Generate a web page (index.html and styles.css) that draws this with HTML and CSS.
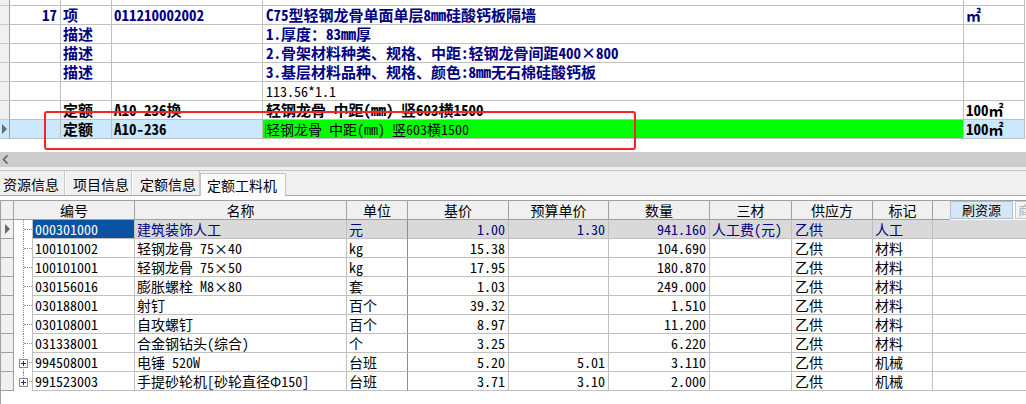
FILE: index.html
```html
<!DOCTYPE html>
<html lang="zh-CN">
<head>
<meta charset="utf-8">
<title>定额工料机</title>
<link rel="stylesheet" href="styles.css">
</head>
<body>
<div class="top">
  <div class="trow partial"><div class="tc rh"></div><div class="tc"></div><div class="tc"></div><div class="tc"></div><div class="tc"></div><div class="tc"></div><div class="tc end"></div></div>
  <div class="trow b navy"><div class="tc rh"></div><div class="tc r">17</div><div class="tc">项</div><div class="tc">011210002002</div><div class="tc">C75型轻钢龙骨单面单层8mm硅酸钙板隔墙</div><div class="tc">㎡</div><div class="tc end"></div></div>
  <div class="trow b navy"><div class="tc rh"></div><div class="tc"></div><div class="tc">描述</div><div class="tc"></div><div class="tc">1.厚度：83mm厚</div><div class="tc"></div><div class="tc end"></div></div>
  <div class="trow b navy"><div class="tc rh"></div><div class="tc"></div><div class="tc">描述</div><div class="tc"></div><div class="tc">2.骨架材料种类、规格、中距:轻钢龙骨间距400×800</div><div class="tc"></div><div class="tc end"></div></div>
  <div class="trow b navy"><div class="tc rh"></div><div class="tc"></div><div class="tc">描述</div><div class="tc"></div><div class="tc">3.基层材料品种、规格、颜色:8mm无石棉硅酸钙板</div><div class="tc"></div><div class="tc end"></div></div>
  <div class="trow"><div class="tc rh"></div><div class="tc"></div><div class="tc"></div><div class="tc"></div><div class="tc">113.56*1.1</div><div class="tc"></div><div class="tc end"></div></div>
  <div class="trow b"><div class="tc rh"></div><div class="tc"></div><div class="tc">定额</div><div class="tc">A10-236换</div><div class="tc">轻钢龙骨 中距(mm) 竖603横1500</div><div class="tc">100㎡</div><div class="tc end"></div></div>
  <div class="trow sel"><div class="tc rh"><span class="tri"></span></div><div class="tc"></div><div class="tc bold">定额</div><div class="tc bold">A10-236</div><div class="tc green"><span class="caret"></span>轻钢龙骨 中距(mm) 竖603横1500</div><div class="tc bold">100㎡</div><div class="tc end"></div></div>
</div>

<div class="gap"></div>

<div class="hscroll">
  <svg class="arrow" width="7" height="9" viewBox="0 0 7 9"><polyline points="5.5,0.5 1.5,4.5 5.5,8.5" fill="none" stroke="#606060" stroke-width="1.6"/></svg>
</div>

<div class="tabbar">
  <div class="tabrow">
    <div class="tab t1">资源信息</div>
    <div class="tab t2">项目信息</div>
    <div class="tab t3">定额信息</div>
    <div class="tab active">定额工料机</div>
  </div>
</div>

<div class="lgap"></div>

<div class="lower">
  <div class="lrow head">
    <div class="lc rh"></div>
    <div class="lc span2">编号</div>
    <div class="lc">名称</div>
    <div class="lc">单位</div>
    <div class="lc">基价</div>
    <div class="lc">预算单价</div>
    <div class="lc">数量</div>
    <div class="lc">三材</div>
    <div class="lc">供应方</div>
    <div class="lc">标记</div>
    <div class="lc last">
      <div class="hfill"></div>
      <div class="btn">刷资源</div>
      <div class="btn2">商品</div>
    </div>
  </div>

  <div class="lrow cur">
    <div class="lc rh"><span class="tri2"></span></div>
    <div class="lc tree"></div>
    <div class="lc code">000301000</div>
    <div class="lc">建筑装饰人工</div>
    <div class="lc">元</div>
    <div class="lc r">1.00</div>
    <div class="lc r">1.30</div>
    <div class="lc r">941.160</div>
    <div class="lc">人工费(元)</div>
    <div class="lc sp">乙供</div>
    <div class="lc">人工</div>
    <div class="lc last"></div>
  </div>
  <div class="lrow">
    <div class="lc rh"></div><div class="lc tree"></div>
    <div class="lc code">100101002</div><div class="lc">轻钢龙骨 75×40</div><div class="lc">kg</div>
    <div class="lc r">15.38</div><div class="lc r"></div><div class="lc r">104.690</div>
    <div class="lc"></div><div class="lc sp">乙供</div><div class="lc">材料</div><div class="lc last"></div>
  </div>
  <div class="lrow">
    <div class="lc rh"></div><div class="lc tree"></div>
    <div class="lc code">100101001</div><div class="lc">轻钢龙骨 75×50</div><div class="lc">kg</div>
    <div class="lc r">17.95</div><div class="lc r"></div><div class="lc r">180.870</div>
    <div class="lc"></div><div class="lc sp">乙供</div><div class="lc">材料</div><div class="lc last"></div>
  </div>
  <div class="lrow">
    <div class="lc rh"></div><div class="lc tree"></div>
    <div class="lc code">030156016</div><div class="lc">膨胀螺栓 M8×80</div><div class="lc">套</div>
    <div class="lc r">1.03</div><div class="lc r"></div><div class="lc r">249.000</div>
    <div class="lc"></div><div class="lc sp">乙供</div><div class="lc">材料</div><div class="lc last"></div>
  </div>
  <div class="lrow">
    <div class="lc rh"></div><div class="lc tree"></div>
    <div class="lc code">030188001</div><div class="lc">射钉</div><div class="lc">百个</div>
    <div class="lc r">39.32</div><div class="lc r"></div><div class="lc r">1.510</div>
    <div class="lc"></div><div class="lc sp">乙供</div><div class="lc">材料</div><div class="lc last"></div>
  </div>
  <div class="lrow">
    <div class="lc rh"></div><div class="lc tree"></div>
    <div class="lc code">030108001</div><div class="lc">自攻螺钉</div><div class="lc">百个</div>
    <div class="lc r">8.97</div><div class="lc r"></div><div class="lc r">11.200</div>
    <div class="lc"></div><div class="lc sp">乙供</div><div class="lc">材料</div><div class="lc last"></div>
  </div>
  <div class="lrow">
    <div class="lc rh"></div><div class="lc tree"></div>
    <div class="lc code">031338001</div><div class="lc">合金钢钻头(综合)</div><div class="lc">个</div>
    <div class="lc r">3.25</div><div class="lc r"></div><div class="lc r">6.220</div>
    <div class="lc"></div><div class="lc sp">乙供</div><div class="lc">材料</div><div class="lc last"></div>
  </div>
  <div class="lrow">
    <div class="lc rh"></div>
    <div class="lc tree"><svg class="plus" width="9" height="9" viewBox="0 0 9 9"><rect x="0.5" y="0.5" width="8" height="8" fill="#fff" stroke="#8a8a8a"/><path d="M2 4.5H7M4.5 2V7" stroke="#1c2a78" stroke-width="1"/></svg></div>
    <div class="lc code">994508001</div><div class="lc">电锤 520W</div><div class="lc">台班</div>
    <div class="lc r">5.20</div><div class="lc r">5.01</div><div class="lc r">3.110</div>
    <div class="lc"></div><div class="lc sp">乙供</div><div class="lc">机械</div><div class="lc last"></div>
  </div>
  <div class="lrow lastrow">
    <div class="lc rh"></div>
    <div class="lc tree"><svg class="plus" width="9" height="9" viewBox="0 0 9 9"><rect x="0.5" y="0.5" width="8" height="8" fill="#fff" stroke="#8a8a8a"/><path d="M2 4.5H7M4.5 2V7" stroke="#1c2a78" stroke-width="1"/></svg></div>
    <div class="lc code">991523003</div><div class="lc">手提砂轮机[砂轮直径Φ150]</div><div class="lc">台班</div>
    <div class="lc r">3.71</div><div class="lc r">3.10</div><div class="lc r">2.000</div>
    <div class="lc"></div><div class="lc sp">乙供</div><div class="lc">机械</div><div class="lc last"></div>
  </div>
</div>

<div class="redbox"></div>
</body>
</html>
```

FILE: styles.css
```css
* { box-sizing: border-box; }
html, body { margin: 0; padding: 0; background: #fff; }
body {
  width: 1026px;
  height: 404px;
  overflow: hidden;
  position: relative;
  font-family: "Noto Sans Mono CJK SC", "Noto Sans CJK SC", "Liberation Mono", monospace;
  font-size: 14px;
  color: #000;
}

/* ---------- top grid ---------- */
.trow {
  display: grid;
  grid-template-columns: 10px 51px 51px 151px 701px 61px 1fr;
  height: 19px;
}
.trow.partial { height: 6px; }
.tc {
  border-right: 1px solid #c0c0c0;
  border-bottom: 1px solid #c0c0c0;
  line-height: 18px;
  padding: 0 2px;
  white-space: nowrap;
  min-width: 0;
}
.tc.rh {
  background: #f0f0f0;
  border-right-color: #a0a0a0;
  border-bottom-color: #c8c8c8;
  padding: 0;
  display: flex;
  align-items: center;
}
.tc.end { border-right: none; border-bottom: none; }
.tc.r { text-align: right; padding-right: 3px; }
.trow.b .tc, .tc.bold { font-weight: bold; font-size: 15px; }
.trow.navy .tc { color: #000080; }
.trow .tc:nth-child(5) { padding-left: 3px; }
.trow.sel .tc { background: #cce8ff; }
.trow.sel .tc.end { background: #fff; }
.trow.sel .tc.green { background: #00ff00; padding-left: 2px; }
.caret {
  display: inline-block;
  width: 1px;
  height: 15px;
  background: #e020e0;
  vertical-align: -3px;
}
.tri {
  display: block;
  width: 0;
  height: 0;
  margin-left: 2px;
  border-left: 5px solid #6a6a6a;
  border-top: 5px solid transparent;
  border-bottom: 5px solid transparent;
}

.gap { height: 13px; }

/* ---------- scroll bar ---------- */
.hscroll {
  height: 15px;
  background: #cdcdcd;
  display: flex;
  align-items: center;
  padding-left: 2px;
}

/* ---------- tabs ---------- */
.tabbar {
  height: 29px;
  background: #f0f0f0;
  padding-top: 3px;
  border-bottom: 1px solid #a8a8a8;
}
.tabrow {
  display: flex;
  height: 25px;
  border-top: 1px solid #c4c4c4;
  align-items: flex-start;
}
.tab {
  height: 24px;
  padding-top: 3px;
  line-height: 20px;
  font-size: 14px;
  white-space: nowrap;
  border-right: 1px solid #c8c8c8;
  box-shadow: inset 1px 0 #ffffff;
}
.tab.t1 { width: 65px; padding-left: 3px; box-shadow: none; }
.tab.t2 { width: 67px; padding-left: 8px; }
.tab.t3 { width: 68px; padding-left: 8px; }
.tab.active {
  width: 86px;
  margin-top: 2px;
  height: 23px;
  padding-top: 1px;
  padding-left: 6px;
  background: #fbfbfb;
  border: 1px solid #c4c4c4;
  border-bottom: none;
  box-shadow: none;
  position: relative;
  z-index: 1;
}

.lgap { height: 4px; }

/* ---------- lower grid ---------- */
.lower {
  border-top: 1px solid #a0a0a0;
  border-left: 1px solid #a0a0a0;
  height: 204px;
}
.lrow {
  display: grid;
  grid-template-columns: 13px 19px 102px 212px 61px 101px 100px 101px 82px 81px 60px 1fr;
  height: 19px;
}
.lc {
  border-right: 1px solid #c0c0c0;
  border-bottom: 1px solid #c0c0c0;
  line-height: 18px;
  padding: 0 2px;
  white-space: nowrap;
  min-width: 0;
}
.lc.r { text-align: right; padding-right: 3px; }
.lc.sp { padding-left: 3px; }
.lc.last { border-right: none; }
.lc.rh {
  background: #f0f0f0;
  border-right-color: #a0a0a0;
  border-bottom-color: #a0a0a0;
  padding: 0;
  display: flex;
  align-items: center;
}
.lrow .lc:nth-child(5) { border-right-color: #8c8c8c; }

.lrow.head .lc {
  background: #f0f0f0;
  border-right-color: #a0a0a0;
  border-bottom-color: #a0a0a0;
  text-align: center;
}
.lrow.head .span2 { grid-column: span 2; }
.lrow.head .lc.last {
  background: #fff;
  border: none;
  padding: 0;
  display: flex;
  align-items: flex-start;
}
.hfill {
  width: 17px;
  height: 19px;
  background: #f0f0f0;
  border-bottom: 1px solid #a0a0a0;
  flex: none;
}
.btn {
  flex: none;
  width: 63px;
  height: 18px;
  background: #d8e7f7;
  border: 1px solid #a9c1dc;
  line-height: 16px;
  text-align: center;
  font-size: 13px;
}
.btn2 {
  flex: none;
  margin-left: 2px;
  width: 12px;
  height: 18px;
  background: #f4f4f4;
  border: 1px solid #c8c8c8;
  border-right: none;
  line-height: 16px;
  font-size: 13px;
  color: #b0b0b0;
  padding-left: 2px;
  overflow: hidden;
  white-space: nowrap;
}

.tree {
  position: relative;
  border-bottom: none !important;
  padding: 0;
}
.tree::before {
  content: "";
  position: absolute;
  left: 9px;
  top: 0;
  bottom: 0;
  border-left: 1px dotted #8a8a8a;
}
.tree::after {
  content: "";
  position: absolute;
  left: 10px;
  top: 9px;
  width: 8px;
  border-top: 1px dotted #8a8a8a;
}
.lastrow .tree::before { bottom: 9px; }
.plus {
  position: absolute;
  left: 5px;
  top: 6px;
  z-index: 1;
  display: block;
}

.lrow.cur .lc { background: #d9d9d9; color: #000080; }
.lrow.cur .lc.rh { background: #f0f0f0; }
.lrow.cur .lc.tree { background: #fff; }
.lrow.cur .lc.code { background: #0a52a3; color: #fff; }

.tri2 {
  display: block;
  width: 0;
  height: 0;
  margin-left: 4px;
  border-left: 5px solid #6a6a6a;
  border-top: 5px solid transparent;
  border-bottom: 5px solid transparent;
}

/* ---------- annotation overlay ---------- */
.redbox {
  position: absolute;
  left: 44px;
  top: 111px;
  width: 592px;
  height: 39px;
  border: 2px solid #f52525;
  border-radius: 3px;
}
```
